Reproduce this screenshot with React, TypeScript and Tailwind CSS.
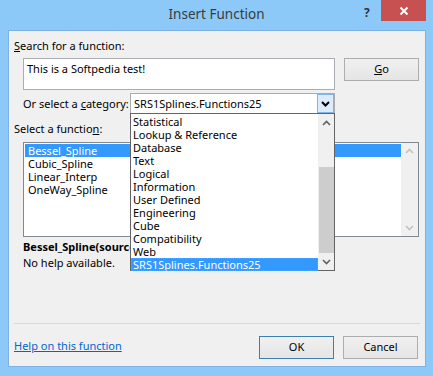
const font = { fontFamily: '"Noto Sans", "Open Sans", sans-serif' }

function ChevronDown({ color = '#000', w = 2 }: { color?: string; w?: number }) {
  return (
    <svg width="9" height="6" viewBox="0 0 9 6" fill="none">
      <path d="M1 1l3.5 3.5L8 1" stroke={color} strokeWidth={w} />
    </svg>
  )
}

function ChevronUp({ color = '#000', w = 2 }: { color?: string; w?: number }) {
  return (
    <svg width="9" height="6" viewBox="0 0 9 6" fill="none">
      <path d="M1 5l3.5-3.5L8 5" stroke={color} strokeWidth={w} />
    </svg>
  )
}

const categories = [
  'Statistical',
  'Lookup & Reference',
  'Database',
  'Text',
  'Logical',
  'Information',
  'User Defined',
  'Engineering',
  'Cube',
  'Compatibility',
  'Web',
  'SRS1Splines.Functions25',
]

const functions = ['Bessel_Spline', 'Cubic_Spline', 'Linear_Interp', 'OneWay_Spline']

export default function App() {
  return (
    <div className="w-[433px] h-[376px] bg-[#8cc8f8] flex flex-col overflow-hidden text-[11px] text-black" style={font}>
      {/* Title bar */}
      <div className="relative h-[30px] shrink-0 flex items-center justify-center">
        <span className="text-[13.5px] text-[#3b3b3b] -mt-[1px]">Insert Function</span>
        <span className="absolute left-[364px] top-[4px] text-[12px] font-bold text-[#333]">?</span>
        <div className="absolute left-[381px] top-0 w-[45px] h-[21px] bg-[#c75050] flex items-center justify-center">
          <svg width="10" height="10" viewBox="0 0 10 10">
            <path d="M1.5 1.5l7 7M8.5 1.5l-7 7" stroke="#fff" strokeWidth="2" />
          </svg>
        </div>
      </div>

      {/* Client */}
      <div className="relative ml-[8px] mr-[7px] h-[337px] bg-[#f0f0f0] border border-[#7fb2e2] flex flex-col">
        <div className="pl-[5px] pt-[7px] leading-[16px]">
          <span className="underline">S</span>earch for a function:
        </div>
        <div className="flex mt-[4px]">
          <div className="ml-[14px] w-[312px] h-[32px] bg-white border border-[#abadb3] px-[3px] pt-[2px] leading-[16px]">
            This is a Softpedia test!
          </div>
          <div className="ml-[9px] w-[75px] h-[23px] border border-[#adadad] bg-gradient-to-b from-[#f0f0f0] to-[#e5e5e5] flex items-center justify-center">
            <span className="underline">G</span>o
          </div>
        </div>

        <div className="flex items-center mt-[3px]">
          <div className="ml-[14px] w-[107px] leading-[16px] whitespace-nowrap">
            Or select a <span className="underline">c</span>ategory:
          </div>
          <div className="relative w-[205px] h-[21px] bg-white border border-[#acacac] flex items-center">
            <span className="pl-[3px] leading-[16px]">SRS1Splines.Functions25</span>
            <div className="absolute right-0 top-0 w-[17px] h-[19px] bg-[#dcecfc] border border-[#7eb4ea] flex items-center justify-center">
              <ChevronDown />
            </div>

            {/* Open dropdown list */}
            <div className="absolute left-[-1px] top-[19px] w-[205px] h-[158px] bg-white border border-[#646464] flex z-10">
              <div className="flex-1 pt-px">
                {categories.map((c, i) => (
                  <div
                    key={c}
                    className={
                      i === categories.length - 1
                        ? 'h-[13px] leading-[13px] pl-[2px] bg-[#3399ff] text-white outline outline-1 outline-dotted outline-[#d08a40] -outline-offset-1'
                        : 'h-[13px] leading-[13px] pl-[2px]'
                    }
                  >
                    {c}
                  </div>
                ))}
              </div>
              <div className="w-[16px] bg-[#f0f0f0] flex flex-col items-center">
                <div className="h-[17px] flex items-center justify-center">
                  <ChevronUp color="#606060" w={1.6} />
                </div>
                <div className="h-[36px]" />
                <div className="w-[15px] h-[86px] bg-[#cdcdcd]" />
                <div className="flex-1 flex items-center justify-center">
                  <ChevronDown color="#606060" w={1.6} />
                </div>
              </div>
            </div>
          </div>
        </div>

        <div className="pl-[5px] mt-[7px] leading-[16px]">
          Select a functio<span className="underline">n</span>:
        </div>
        <div className="ml-[14px] mt-[5px] w-[396px] h-[95px] bg-white border border-[#828790] flex">
          <div className="flex-1 pt-px pl-px">
            {functions.map((f, i) => (
              <div
                key={f}
                className={
                  i === 0
                    ? 'h-[13px] leading-[13px] pl-[3px] bg-[#3399ff] text-white'
                    : 'h-[13px] leading-[13px] pl-[3px]'
                }
              >
                {f}
              </div>
            ))}
          </div>
          <div className="w-[17px] bg-[#f0f0f0] flex flex-col items-center justify-between py-[5px]">
            <ChevronUp color="#c2c2c2" w={1.6} />
            <ChevronDown color="#c2c2c2" w={1.6} />
          </div>
        </div>

        <div className="ml-[14px] mt-[2px] leading-[16px] font-bold">Bessel_Spline(source_x,source_y,target_x)</div>
        <div className="ml-[14px] leading-[16px]">No help available.</div>

        <div className="mx-[5px] mt-[52px] h-px bg-[#d9d9d9]" />

        <div className="flex items-center mt-[12px]">
          <a className="ml-[5px] -mt-[3px] leading-[16px] text-[#0066cc] underline">Help on this function</a>
          <div className="ml-auto w-[75px] h-[23px] border border-[#3c7fb1] bg-gradient-to-b from-[#f0f0f0] to-[#e5e5e5] flex items-center justify-center">
            OK
          </div>
          <div className="ml-[9px] mr-[7px] w-[75px] h-[23px] border border-[#adadad] bg-gradient-to-b from-[#f0f0f0] to-[#e5e5e5] flex items-center justify-center">
            Cancel
          </div>
        </div>
      </div>
    </div>
  )
}
